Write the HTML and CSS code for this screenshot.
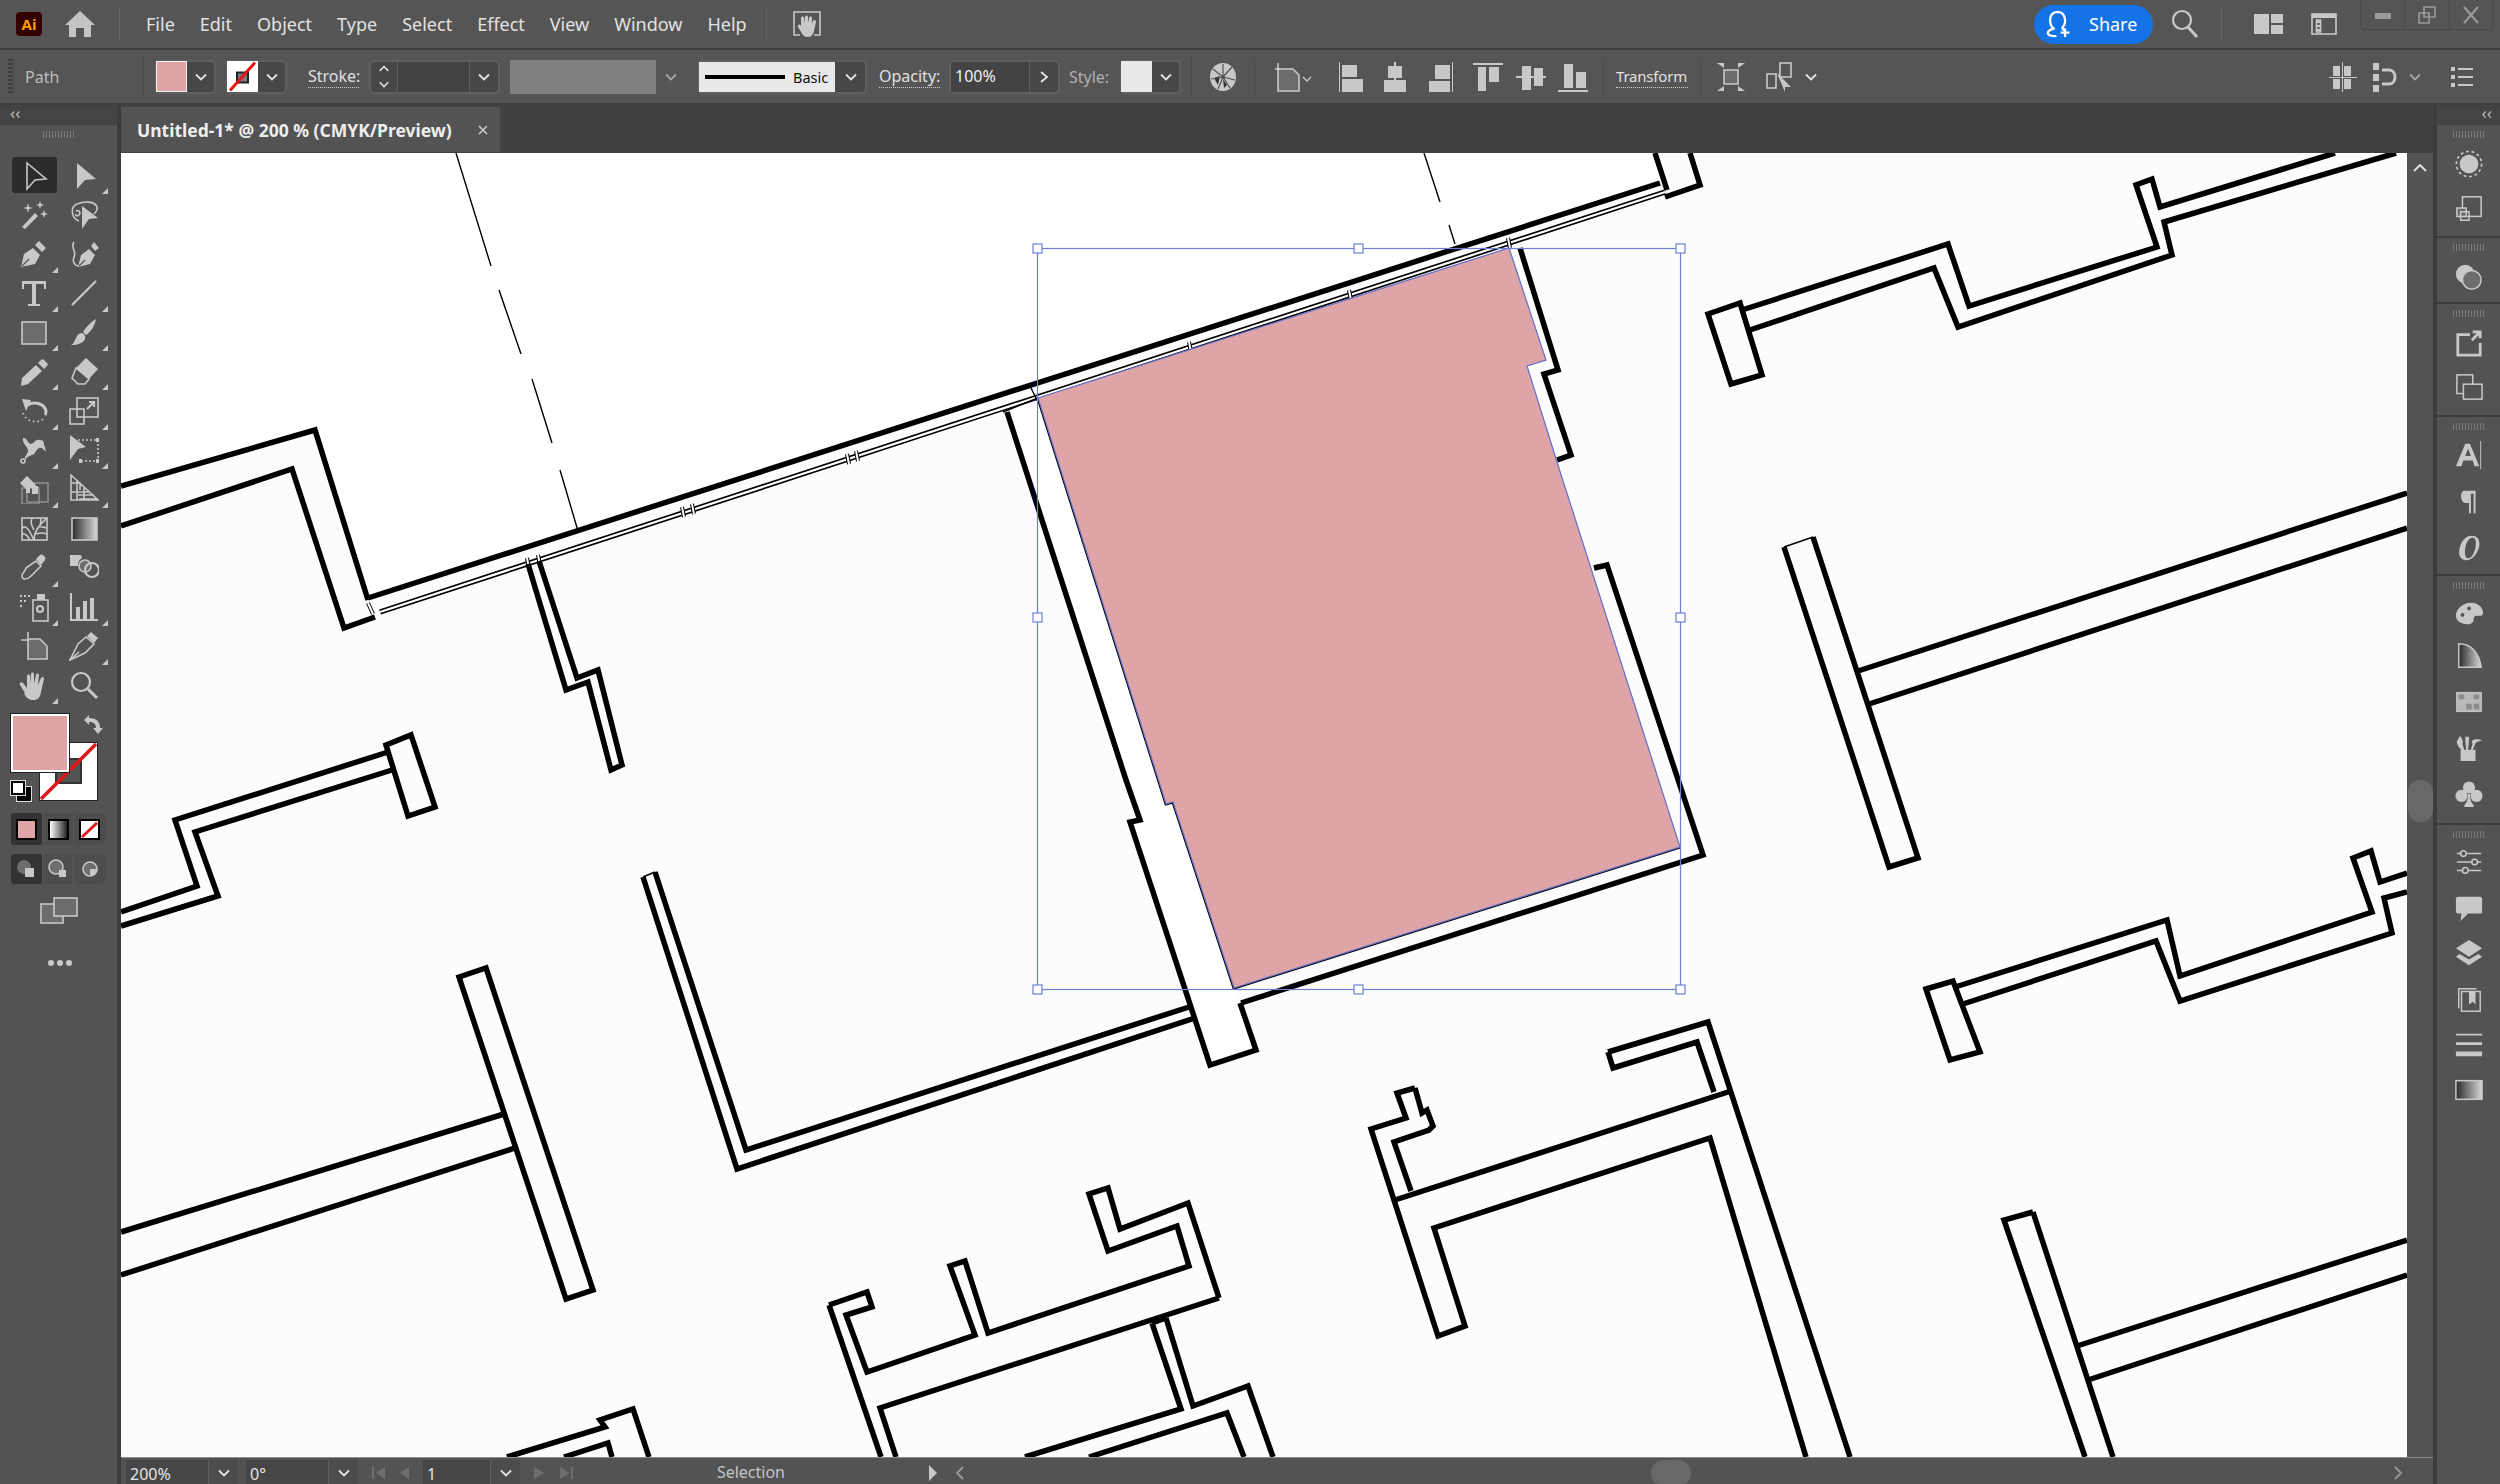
FILE: index.html
```html
<!DOCTYPE html>
<html lang="en">
<head>
<meta charset="utf-8">
<title>Untitled-1* @ 200 % (CMYK/Preview)</title>
<link rel="stylesheet" href="styles.css">
</head>
<body>
<svg class="defs" width="0" height="0">
  <defs>
    <linearGradient id="gr"><stop offset="0" stop-color="#2a2a2a"/><stop offset="1" stop-color="#d8d8d8"/></linearGradient>
    <linearGradient id="grw"><stop offset="0" stop-color="#fff"/><stop offset="1" stop-color="#222"/></linearGradient>
    <symbol id="chev" viewBox="0 0 14 14"><path class="ch" d="M2 4.500l5 5 5-5"/></symbol>
  </defs>
</svg>

<header class="titlebar">
  <div class="ai-logo">Ai</div>
  <svg class="home" viewBox="0 0 30 26"><path d="M15 0L30 14h-4v12h-7v-9h-8v9H4V14H0z"/></svg>
  <div class="vsep m24"></div>
  <nav class="menu">
    <span>File</span><span>Edit</span><span>Object</span><span>Type</span><span>Select</span><span>Effect</span><span>View</span><span>Window</span><span>Help</span>
  </nav>
  <div class="vsep m22"></div>
  <svg class="arr-ic m25" viewBox="0 0 30 30"><path class="ln" d="M8 26H2V3h26v23h-6"/><path d="M9 17V9c0-2 3-2 3 0v5l1-6c0-2 3-2 3 0v6l1-5c0-2 3-2 3 0v6l1-3c1-2 3-1 3 1l-2 9c-1 4-3 6-6 6s-5-1-7-5l-3-5c-1-2 1-3 2-2z"/></svg>
  <div class="share">
    <svg class="share-ic" viewBox="0 0 30 32"><path class="sw" d="M10 22C3 18 2 3 13 2c10 0 11 13 6 18 0 2 1 3 3 3M9 21c-2 1-6 2-7 5 0 3 5 4 10 4"/><path class="sw" d="M22 21v10M17 26h10"/></svg>
    <span>Share</span>
  </div>
  <svg class="search m18" viewBox="0 0 28 30"><circle class="ln2" cx="11" cy="11" r="9"/><path class="ln3" d="M17 18l9 10"/></svg>
  <div class="vsep m22"></div>
  <svg class="lay m34" viewBox="0 0 29 20"><path d="M0 0h15v20H0zM17 0h12v9H17zM17 11h12v9H17z"/></svg>
  <svg class="win m28" viewBox="0 0 26 22"><rect class="ln" x="1" y="1" width="24" height="20"/><path d="M1 1h24v4H1zM6 8h3v2H6zM6 12h3v2H6zM6 16h3v2H6z"/><rect class="ln" x="5.500" y="7" width="4" height="12"/></svg>
  <div class="winctl">
    <div class="wbtn"><svg viewBox="0 0 18 18"><path d="M1 7h16v6H1z"/></svg></div>
    <div class="wbtn"><svg viewBox="0 0 18 18"><path class="ln" d="M6 1h11v10H6zM1 7h10v10H1z"/></svg></div>
    <div class="wbtn"><svg viewBox="0 0 18 18"><path class="ln2" d="M2 1l14 16M16 1L2 17"/></svg></div>
  </div>
</header>

<section class="controlbar">
  <div class="grip"></div>
  <div class="lbl path">Path</div>
  <div class="vsep2"></div>
  <div class="combo m11 w61"><div class="swatch pink"></div><svg class="chev"><use href="#chev"/></svg></div>
  <div class="combo m10 w61">
    <div class="swatch wht"><svg viewBox="0 0 31 30"><rect class="sq" x="10" y="11" width="11" height="10"/><path class="red" d="M3 29L28 1"/></svg></div>
    <svg class="chev"><use href="#chev"/></svg>
  </div>
  <div class="ulbl m21 w51">Stroke:</div>
  <div class="combo m10 w131">
    <div class="spin"><svg viewBox="0 0 14 14"><path class="ch" d="M2 8l5-5 5 5"/></svg><svg viewBox="0 0 14 14"><path class="ch" d="M2 5l5 5 5-5"/></svg></div>
    <div class="field f73"></div>
    <svg class="chev"><use href="#chev"/></svg>
  </div>
  <div class="grayfield m10"></div>
  <div class="graychev"><svg class="chev dim"><use href="#chev"/></svg></div>
  <div class="combo m11 w170">
    <div class="basic"><i></i><span>Basic</span></div>
    <svg class="chev"><use href="#chev"/></svg>
  </div>
  <div class="ulbl m12 w61">Opacity:</div>
  <div class="combo m9 w111">
    <div class="field f82">100%</div>
    <svg class="chev right" viewBox="0 0 14 14"><path class="ch" d="M4 2l6 5-6 5"/></svg>
  </div>
  <div class="lbl style m9">Style:</div>
  <div class="combo m11 w61"><div class="swatch lgt"></div><svg class="chev"><use href="#chev"/></svg></div>
  <div class="vsep2 m10"></div>
  <svg class="globe m18" viewBox="0 0 26 28"><ellipse cx="13" cy="14" rx="13" ry="14"/><path class="dkfill" d="M4 15l6-2-2 9zM13 16l4 6-3 3z"/><path class="dkl" d="M13 14L13 1M13 14L3 6M13 14L1 16M13 14L8 26M13 14l7 11M13 14l12 3M13 14l9-10"/><circle class="hole" cx="13" cy="14" r="2"/></svg>
  <div class="vsep2 m18"></div>
  <svg class="artb m18" viewBox="0 0 39 30"><path class="mid" d="M5 7h15l6 6v16H5z"/><path class="ln" d="M5 7h15l6 6v16H5z"/><path class="ln" d="M2 7h5M5 1v7"/><path class="ch2" d="M30 15l4 4 4-4"/></svg>
  <svg class="al m26" viewBox="0 0 30 30"><path d="M1 0h1v30H1zM4 3h15v15H4zM4 17h21v13H4z"/><path d="M3 15h20v2H3z" class="gapc"/></svg>
  <svg class="al m12" viewBox="0 0 30 30"><path d="M14 0h2v30h-2zM8 4h14v12H8zM4 18h22v12H4z"/></svg>
  <svg class="al m14" viewBox="0 0 30 30"><path d="M28 0h1v30h-1zM11 3h15v14H11zM5 19h21v12H5z"/></svg>
  <svg class="al m19" viewBox="0 0 30 30"><path d="M0 1h30v2H0zM5 5h8v24H5zM16 5h10v15H16z"/></svg>
  <svg class="al m13" viewBox="0 0 30 30"><path d="M0 14h30v2H0zM6 4h9v24H6zM18 6h9v18h-9z"/></svg>
  <svg class="al m12" viewBox="0 0 30 30"><path d="M0 28h30v2H0zM6 2h9v24H6zM18 10h10v16H18z"/></svg>
  <div class="vsep2 m15"></div>
  <div class="ulbl small m12 w72">Transform</div>
  <div class="vsep2 m12"></div>
  <svg class="al m15" viewBox="0 0 30 30"><path class="mid" d="M8 8h14v14H8z"/><path class="ln" d="M8 8h14v14H8z"/><path d="M1 1l7 5V1M29 1l-7 5V1M1 29l7-5v5M29 29l-7-5v5"/></svg>
  <svg class="al m20" viewBox="0 0 30 30"><rect class="ln" x="1" y="12" width="9" height="14"/><rect class="ln" x="14" y="1" width="11" height="14"/><path d="M11 11l14 14-6 0v5z"/></svg>
  <svg class="chev m8"><use href="#chev"/></svg>
  <svg class="al auto" viewBox="0 0 30 30"><path d="M5 4h7v10H5zM16 4h7v10h-7zM5 17h7v10H5zM16 17h7v10h-7zM1 15h28v1H1zM14 0h1v30h-1z"/></svg>
  <svg class="al m12" viewBox="0 0 30 30"><path d="M3 1h6v7H3zM3 12h6v7H3zM3 23h6v7H3z"/><path class="ln3" d="M12 8h7c8 0 8 14 0 14h-7"/></svg>
  <svg class="chev dim m8"><use href="#chev"/></svg>
  <svg class="al m25" viewBox="0 0 30 30"><path d="M4 5h4v4H4zM4 13h4v4H4zM4 21h4v4H4zM11 6h15v2H11zM11 14h15v2H11zM11 22h15v2H11z"/></svg>
</section>

<main class="workspace">
  <aside class="toolpanel">
    <div class="collapse left">‹‹</div>
    <div class="tools-body">
      <div class="gripline"></div>
      <div class="tools">
        <div class="tool on"><svg viewBox="0 0 30 30"><path class="ln" d="M8 2l19 16-11 1-8 9z"/></svg></div>
        <div class="tool more"><svg viewBox="0 0 30 30"><path d="M8 2l19 16-11 1-8 9z"/></svg></div>
        <div class="tool"><svg viewBox="0 0 30 30"><path d="M3 27l13-14 3 3L6 29zM9 3l1 4 4 1-4 1-1 4-1-4-4-1 4-1zM21 1l1 3 3 1-3 1-1 3-1-3-3-1 3-1zM25 10l1 3 3 1-3 1-1 3-1-3-3-1 3-1z"/></svg></div>
        <div class="tool"><svg viewBox="0 0 30 30"><path class="ln" d="M10 21C2 18 1 7 8 4c7-3 18-3 20 3 1 3-1 5-3 7M7 11c3-2 5 2 3 4s-4 0-3-1"/><path d="M13 6l16 12-9 1-7 10z"/></svg></div>
        <div class="tool more"><svg viewBox="0 0 30 30"><path d="M2 28l3-13 9-6 7 7-5 9zM16 6l4-4 7 7-4 4z"/><path class="dkl" d="M3 27l7-7"/></svg></div>
        <div class="tool"><svg viewBox="0 0 30 30"><path d="M9 28l3-12 8-6 6 6-5 9zM22 7l3-4 5 6-4 3z"/><path class="ln" d="M5 3C1 9 8 12 5 18c-2 5 1 9 5 9"/><path class="dkl" d="M10 27l6-6"/></svg></div>
        <div class="tool more"><svg viewBox="0 0 30 30"><path d="M3 3h24v8h-2V6H17v20h4v2H9v-2h4V6H5v5H3z"/></svg></div>
        <div class="tool more"><svg viewBox="0 0 30 30"><path class="ln2" d="M3 27L27 3"/></svg></div>
        <div class="tool more"><svg viewBox="0 0 30 30"><rect class="mid ln" x="3" y="4" width="24" height="22"/></svg></div>
        <div class="tool more"><svg viewBox="0 0 30 30"><path d="M27 1c-1 6-5 13-10 16l-3-3C17 9 22 4 27 1zM12 15c3 0 5 3 4 6-2 4-7 6-14 6 5-2 4-11 10-12z"/></svg></div>
        <div class="tool more"><svg viewBox="0 0 30 30"><path d="M3 21L17 8l6 6L9 27l-7 2zM19 6l3-3c1-1 2-1 3 0l3 3c1 1 1 2 0 3l-3 3z"/></svg></div>
        <div class="tool more"><svg viewBox="0 0 30 30"><path d="M17 1l12 11-9 10-13-11z"/><path class="ln" d="M7 11l13 11-4 5H9l-6-6z"/></svg></div>
        <div class="tool more"><svg viewBox="0 0 30 30"><path class="ln3" d="M8 9c7-4 17-2 19 6 0 2 0 3-1 4"/><path d="M3 3l9 1-5 11z"/><path class="dots" d="M4 17c3 9 14 11 20 6"/></svg></div>
        <div class="tool more"><svg viewBox="0 0 30 30"><rect class="ln" x="8" y="2" width="21" height="19"/><rect class="ln" x="1" y="13" width="14" height="15"/><path class="ln2" d="M18 13l7-7M20 6h5v5"/></svg></div>
        <div class="tool more"><svg viewBox="0 0 30 30"><path d="M4 3c4-1 4 5 8 6 2 0 3-3 6-4 4-1 8 4 9 12-2-3-5-5-7-4-3 1-3 6-7 7-3 1-5 2-7 5-1-4 3-6 3-9 0-5-6-7-5-13z"/><circle class="ln" cx="4" cy="26" r="2"/><circle class="ln" cx="22" cy="8" r="2"/></svg></div>
        <div class="tool more"><svg viewBox="0 0 30 30"><path class="ln dash" d="M9 5h20v21H10"/><path d="M1 0l16 12-8 2-8 11zM27 3h3v4h-3zM27 24h3v4h-3zM10 24h3v4h-3z"/></svg></div>
        <div class="tool more"><svg viewBox="0 0 30 30"><rect class="ln dimln" x="8" y="9" width="21" height="19"/><rect class="ln dimln" x="3" y="14" width="17" height="16"/><path d="M1 9l7-7 3 3 6 6-3 3-3 0 0 5-4 0 0-4z"/><path d="M13 12h6v8h-6z"/></svg></div>
        <div class="tool more"><svg viewBox="0 0 30 30"><path class="ln" d="M2 1l27 25H2zM2 9h9M2 18h18M2 1v25M8 7v19M15 14v12M2 9l9 0 0 7M25 21H9M29 25H10"/></svg></div>
        <div class="tool"><svg viewBox="0 0 30 30"><rect class="ln" x="3" y="4" width="25" height="22"/><path class="ln" d="M3 14c5-3 7 2 12 12M3 20c4-1 6 2 8 6M15 26c0-8 4-14 13-22M13 4c-2 5 0 8 2 12M22 4c0 3 0 5-1 7M28 14c-4-1-6-2-9-1M28 20c-5-2-8-1-11 0"/></svg></div>
        <div class="tool"><svg viewBox="0 0 30 30"><rect class="gr ln" x="3" y="4" width="25" height="22"/></svg></div>
        <div class="tool more"><svg viewBox="0 0 30 30"><path class="ln" d="M7 15L17 8l5 5-10 10c-4 4-9 4-9 0 0-3 3-4 4-8z"/><path d="M17 6l4-4c2-2 7 3 5 5l-4 5z"/></svg></div>
        <div class="tool"><svg viewBox="0 0 30 30"><path d="M1 2h11l1 3c-3 2-4 4-4 8L1 13z"/><circle class="mid ln" cx="16" cy="13" r="6"/><circle class="ln thick" cx="23" cy="17" r="7"/></svg></div>
        <div class="tool more"><svg viewBox="0 0 30 30"><rect class="ln" x="14" y="8" width="15" height="21"/><path d="M18 2h8v6h-8zM1 3h2v2H1zM5 3h2v2H5zM9 3h2v2H9zM1 8h2v2H1zM5 8h2v2H5zM1 13h2v2H1z"/><circle class="ln2" cx="21" cy="17" r="3"/></svg></div>
        <div class="tool more"><svg viewBox="0 0 30 30"><path d="M1 1h2v26h26v2H1zM7 15h4v12H7zM14 9h4v18h-4zM21 6h4v21h-4z"/></svg></div>
        <div class="tool"><svg viewBox="0 0 30 30"><path class="mid ln" d="M9 8h12l7 7v13H9z"/><path class="ln" d="M2 9h8M9 1v8"/></svg></div>
        <div class="tool more"><svg viewBox="0 0 30 30"><path class="ln" d="M1 29l8-16 8-7 8 7-9 9z"/><path d="M18 5l4-4 7 6-4 5z"/><path class="ln" d="M1 29l9-8"/></svg></div>
        <div class="tool more"><svg viewBox="0 0 30 30"><path d="M6 22L1 14c-1-2 1-4 3-2l4 5V5c0-2 3-2 3 0v8l1-10c0-2 3-2 3 0v10l2-9c0-2 3-2 3 0l-1 10 3-7c1-2 3-1 3 1l-3 13c-1 6-3 8-8 8-4 0-7-2-9-7z"/></svg></div>
        <div class="tool"><svg viewBox="0 0 30 30"><circle class="ln2" cx="12" cy="11" r="9"/><path class="ln3" d="M19 18l9 9"/></svg></div>
      </div>
      <div class="colors">
        <div class="fillbox"></div>
        <div class="strokebox"><i></i><svg viewBox="0 0 57 57"><path class="red2" d="M1 56L56 1"/></svg></div>
        <svg class="swap" viewBox="0 0 20 20"><path d="M1 5l5-5v3c8 0 11 4 11 10h3l-5 6-5-6h3c0-4-2-6-7-6v3z"/></svg>
        <div class="defbox"><b></b><i></i></div>
      </div>
      <div class="segrow">
        <div class="seg on"><span class="mini pink"></span></div>
        <div class="seg"><span class="mini grad"></span></div>
        <div class="seg"><span class="mini none"><svg viewBox="0 0 18 18"><path class="red3" d="M1 17L17 2"/></svg></span></div>
      </div>
      <div class="segrow second">
        <div class="seg on"><svg viewBox="0 0 20 20"><circle class="midc" cx="8" cy="8" r="7"/><path d="M9 9h9v9H9z"/></svg></div>
        <div class="seg"><svg viewBox="0 0 20 20"><circle class="ln midc" cx="8" cy="8" r="7"/><path d="M11 11h7v7h-7z"/></svg></div>
        <div class="seg"><svg viewBox="0 0 20 20"><circle class="ln midc" cx="10" cy="10" r="7"/><path d="M10 10h7c0 4-3 7-7 7z"/></svg></div>
      </div>
      <svg class="screen" viewBox="0 0 38 28"><rect class="mid ln" x="1" y="7" width="22" height="19"/><rect class="mid ln" x="14" y="1" width="23" height="18"/></svg>
      <div class="more-dots"><i></i><i></i><i></i></div>
    </div>
  </aside>

  <div class="center">
    <div class="tabbar">
      <div class="tab"><span>Untitled-1* @ 200 % (CMYK/Preview)</span><svg viewBox="0 0 12 12"><path class="ln" d="M2 2l8 8M10 2l-8 8"/></svg></div>
    </div>
    <div class="canvasrow">
      <div class="canvas">
        <svg class="art" width="2286" height="1304" viewBox="121 153 2286 1304">
          <polygon class="paper" points="121,153 1660,153 1665,180 368,598 315,430 121,486"/>
          <polygon class="paper" points="1007,412 1036,383 1038,400 1240,1003 1256,1050 1210,1065 1130,822 1140,820 1126,780"/>
          <g class="walls">
            <path d="M456 153L491 266M499 290L521 354M532 379L552 443M560 470L578 531M1424 153L1440 202M1449 225L1455 244" class="thin"/>
            <path d="M121 486L315 430L368 600M121 526L292 469L344 628L375 617"/>
            <path d="M368 598L1660 183M1655 153L1667 190M1690 153L1700 185L1665 197"/>
            <path d="M380 612L1665 192" class="dbl"/>
            <path d="M380 612L1665 192" class="dblw"/>
            <path class="mullb" d="M368 603L373 614M527 558L529 568M538 555L540 565M682 507L684 517M692 504L694 514M847 454L849 464M856 451L858 461M1189 342L1191 352M1349 290L1351 300M1508 238L1510 248"/>
            <path class="mull" d="M368 603L373 614M527 558L529 568M538 555L540 565M682 507L684 517M692 504L694 514M847 454L849 464M856 451L858 461M1189 342L1191 352M1349 290L1351 300M1508 238L1510 248"/>
            <path d="M528 564L566 690L588 682L611 770L622 765L598 670L577 678L539 561"/>
            <path d="M1007 412L1126 780L1140 820L1130 822L1210 1065L1256 1050L1240 1003"/>
            <path class="thin" d="M1005 395L1036 383M1003 412L1038 398M1031 388L1038 402"/>
            <path d="M1520 248L1558 370L1544 374L1571 455L1557 460M1594 568L1607 565L1703 855L1241 1003"/>
            <path d="M655 872L746 1150L1189 1007M643 877L737 1169L1195 1018"/>
            <path class="thin" d="M643 877L655 872"/>
            <path d="M386 745L411 735L435 807L408 816Z"/>
            <path d="M121 912L197 886L175 820L388 752M121 926L218 896L195 832L392 770"/>
            <path d="M459 977L486 968L593 1290L566 1299Z"/>
            <path d="M121 1232L504 1114M121 1275L515 1148"/>
            <path d="M1708 314L1740 303L1762 375L1731 384Z"/>
            <path d="M1742 310L1948 244L1969 306L2157 247L2136 185L2152 179L2160 207L2335 153M1750 330L1934 268L1958 327L2172 255L2164 222L2396 153"/>
            <path d="M1813 537L1918 858L1889 867L1784 547"/>
            <path class="thin" d="M1784 547L1813 537"/>
            <path d="M1858 671L2407 493M1869 704L2407 528"/>
            <path d="M1926 989L1953 981L1980 1052L1950 1060Z"/>
            <path d="M1955 987L2167 920L2180 976L2372 912L2353 858L2371 851L2380 882L2407 873M1963 1004L2156 941L2180 1001L2392 933L2384 898L2407 892"/>
            <path d="M1608 1052L1708 1022L1850 1457M1608 1052L1613 1068L1697 1042L1714 1092M1395 1200L1728 1092"/>
            <path d="M1415 1088L1397 1093L1406 1118L1371 1129L1438 1336L1465 1326L1434 1228L1710 1138L1806 1457M1415 1088L1422 1113L1427 1110L1433 1126L1429 1130L1394 1142L1411 1191"/>
            <path d="M1219 1298L880 1408L896 1457M829 1305L867 1292L872 1307L846 1315L867 1372L975 1335L950 1266L965 1261L988 1333L1189 1266L1177 1226L1108 1251L1089 1194L1108 1188L1120 1229L1188 1203L1219 1298M829 1305L881 1457"/>
            <path d="M1152 1323L1181 1409L1025 1457M1166 1318L1193 1406L1248 1386L1273 1457M1089 1457L1227 1413L1244 1457M1152 1323L1166 1318"/>
            <path d="M507 1457L605 1427L600 1420L633 1409L649 1457M564 1457L608 1443L612 1457"/>
            <path d="M2033 1212L2004 1220L2085 1457M2033 1212L2113 1457M2077 1346L2407 1240M2088 1380L2407 1275"/>
            <path class="edge" d="M1038 398L1166 804L1173 802L1234 988L1680 847"/>
          </g>
          <path class="shape" d="M1038 398L1509 248L1546 360L1527 366L1557 462L1680 847L1234 988L1173 802L1166 804Z"/>
          <g class="sel">
            <rect class="bbox" x="1037.500" y="248.500" width="643" height="741"/>
            <rect x="1033" y="244" width="9" height="9"/><rect x="1354" y="244" width="9" height="9"/><rect x="1676" y="244" width="9" height="9"/>
            <rect x="1033" y="613" width="9" height="9"/><rect x="1676" y="613" width="9" height="9"/>
            <rect x="1033" y="985" width="9" height="9"/><rect x="1354" y="985" width="9" height="9"/><rect x="1676" y="985" width="9" height="9"/>
          </g>
        </svg>
      </div>
      <div class="vscroll"><svg viewBox="0 0 14 8"><path class="ch" d="M1 7l6-6 6 6"/></svg><div class="vthumb"></div></div>
    </div>
    <footer class="statusbar">
      <div class="sfield f82">200%</div><div class="sdd"><svg class="chev"><use href="#chev"/></svg></div>
      <div class="sfield f82 m8">0°</div><div class="sdd"><svg class="chev"><use href="#chev"/></svg></div>
      <div class="navbtns m11"><svg viewBox="0 0 50 16"><path d="M3 2h2v12H3zM16 2v12l-9-6zM40 2v12l-9-6z"/></svg></div>
      <div class="sfield f67 m4">1</div><div class="sdd"><svg class="chev"><use href="#chev"/></svg></div>
      <div class="navbtns m14"><svg viewBox="0 0 50 16"><path d="M0 2v12l10-6zM26 2v12l10-6zM37 2h2v12h-2z"/></svg></div>
      <div class="sellbl">Selection</div>
      <svg class="play" viewBox="0 0 10 16"><path d="M1 0l8 8-8 8z"/></svg>
      <div class="hscroll">
        <svg class="hch" viewBox="0 0 8 14"><path class="ch" d="M7 1L1 7l6 6"/></svg>
        <div class="hthumb"></div>
        <svg class="hch" viewBox="0 0 8 14"><path class="ch" d="M1 1l6 6-6 6"/></svg>
      </div>
    </footer>
  </div>

  <aside class="rightpanel">
    <div class="collapse right">‹‹</div>
    <div class="dock d111">
      <div class="gripline"></div>
      <svg viewBox="0 0 30 30"><circle cx="15" cy="15" r="10"/><circle class="dots2" cx="15" cy="15" r="13.500"/></svg>
      <svg viewBox="0 0 30 30"><rect class="ln" x="8" y="3" width="20" height="21"/><path class="mid ln" d="M2 15h10v9H2z"/><path class="ln" d="M6 19h9v9H6z"/></svg>
    </div>
    <div class="dock d65">
      <div class="gripline"></div>
      <svg viewBox="0 0 30 30"><circle cx="11" cy="12" r="10"/><circle class="midc ln" cx="18" cy="18" r="10"/></svg>
    </div>
    <div class="dock d111">
      <div class="gripline"></div>
      <svg viewBox="0 0 30 30"><path class="ln3" d="M16 6H3v22h24V15M27 10V3h-8M27 3l-9 9"/></svg>
      <svg viewBox="0 0 30 30"><rect class="ln" x="2" y="2" width="17" height="20"/><rect class="bgfill ln" x="9" y="12" width="20" height="16"/></svg>
    </div>
    <div class="dock d158 typ">
      <div class="gripline"></div>
      <svg viewBox="0 0 30 30"><path d="M1 27L11 3h5l10 24h-5l-2-6H9l-2 6zM11 16h6l-3-8zM27 0h1v30h-1z"/></svg>
      <svg viewBox="0 0 30 30"><path d="M10 2h12v24h-2V5h-3v21h-2V15h-3c-7 0-7-13-2-13z"/></svg>
      <svg viewBox="0 0 30 30"><path fill-rule="evenodd" d="M18 2c6 0 9 4 8 11-2 9-8 15-14 15S3 23 5 15C7 7 12 2 18 2zM19 4c-4 0-7 5-8 11-1 6 0 11 3 11 4 0 7-6 8-12 1-6 0-10-3-10z"/></svg>
    </div>
    <div class="dock d248 lib">
      <div class="gripline"></div>
      <svg viewBox="0 0 30 30"><path fill-rule="evenodd" d="M1 17C1 9 9 3 17 3c8 0 13 5 13 11 0 3-2 3-5 3-3 0-5 0-5 3 0 3-1 6-7 6-7 0-12-4-12-9zM15 7a2 2 0 100 4 2 2 0 000-4zM8 14a2 2 0 100 4 2 2 0 000-4z"/><circle class="hole" cx="22" cy="10" r="0"/></svg>
      <svg viewBox="0 0 30 30"><path class="gr2 ln" d="M4 2c13 0 22 9 24 25H4z"/></svg>
      <svg viewBox="0 0 30 30"><rect class="ln" x="2" y="5" width="26" height="20"/><path d="M2 5h26v20H2z" class="dimfill"/><path class="dkfill2" d="M4 7h6v5H4zM20 7h6v5h-6zM12 17h6v6h-6zM20 17h6v6h-6z"/></svg>
      <svg viewBox="0 0 30 30"><path d="M6 17h16v12H6zM2 8c1-2 3-4 3-6 3 3 4 6 3 9l2 6H7c-2-2-5-5-5-9zM11 3h4v4l-1 10h-2L11 7zM18 8c1-3 8-3 11-1-3 1-6 1-7 3l-3 7h-2l2-7c-1 0-1-1-1-2z"/></svg>
      <svg viewBox="0 0 30 30"><circle cx="15" cy="8" r="6.500"/><circle cx="7" cy="17" r="6.500"/><circle cx="23" cy="17" r="6.500"/><path d="M14 15h2c0 5 1 9 4 12v2H10v-2c3-3 4-7 4-12z"/></svg>
    </div>
    <div class="dock last">
      <div class="gripline"></div>
      <svg viewBox="0 0 30 30"><path class="ln" d="M2 6h5M12 6h16M2 15h16M24 15h4M2 24h6M14 24h14"/><circle class="ln" cx="9" cy="6" r="3"/><circle class="ln" cx="21" cy="15" r="3"/><circle class="ln" cx="11" cy="24" r="3"/></svg>
      <svg viewBox="0 0 30 30"><path d="M4 3h23c1 0 2 1 2 2v14c0 1-1 2-2 2H14l-8 8 1-8H4c-2 0-3-1-3-2V5c0-1 1-2 3-2z"/></svg>
      <svg viewBox="0 0 30 30"><path d="M15 1l14 9-14 9-14-9zM5 16l10 6 10-6 4 3-14 9-14-9z"/></svg>
      <svg viewBox="0 0 30 30"><path class="ln" d="M4 25V4h19M7 28V7h20v21z"/><path d="M15 7h7v14l-3-3-4 3z"/></svg>
      <svg viewBox="0 0 30 30"><path d="M1 4h28v2H1zM1 13h28v3H1zM1 23h28v5H1z"/></svg>
      <svg viewBox="0 0 30 30"><rect class="gr ln" x="1" y="5" width="28" height="20"/></svg>
    </div>
  </aside>
</main>
</body>
</html>
```
FILE: styles.css
```css
* { box-sizing: border-box; }
html, body { margin: 0; padding: 0; height: 100%; }
body {
  width: 2500px; height: 1484px; overflow: hidden;
  background: #535353; color: #e0e0e0;
  font-family: "Noto Sans", "Open Sans", sans-serif;
  display: flex; flex-direction: column;
}
.defs { position: absolute; }
svg { display: block; fill: #c8c8c8; flex: none; }
i, b { display: block; }

.ln { fill: none; stroke: #c8c8c8; stroke-width: 1.6; }
.ln2 { fill: none; stroke: #c8c8c8; stroke-width: 2.2; }
.ln3 { fill: none; stroke: #c8c8c8; stroke-width: 3; }
.mid { fill: #6c6c6c; }
.midc { fill: #6e6e6e; }
.gr { fill: url(#gr); }
.gr2 { fill: url(#gr); }
.dimln { stroke: #8d8d8d; }
.dash { stroke-dasharray: 2 2; }
.thick { stroke-width: 2.2; }
.dots { fill: none; stroke: #c8c8c8; stroke-width: 1.8; stroke-dasharray: 1.500 3; }
.dots2 { fill: none; stroke: #c8c8c8; stroke-width: 1.8; stroke-dasharray: 3 3; }
.dkl { fill: none; stroke: #535353; stroke-width: 1.2; }
.dkfill { fill: #333; }
.dkfill2 { fill: #8c8c8c; }
.dimfill { fill: #b8b8b8; }
.bgfill { fill: #535353; }
.gapc { fill: #535353; }
.hole { fill: #535353; }
.ch { fill: none; stroke: #e4e4e4; stroke-width: 1.8; }
.ch2 { fill: none; stroke: #c8c8c8; stroke-width: 1.4; }
.sq { fill: #7a7a7a; stroke: #222; stroke-width: 2; }
.red { fill: none; stroke: #e1161b; stroke-width: 3; }
.red2 { fill: none; stroke: #e1161b; stroke-width: 3.500; }
.red3 { fill: none; stroke: #e1161b; stroke-width: 3; }

.m4 { margin-left: 4px; } .m8 { margin-left: 8px; } .m9 { margin-left: 9px; }
.m10 { margin-left: 10px; } .m11 { margin-left: 11px; } .m12 { margin-left: 12px; }
.m13 { margin-left: 13px; } .m14 { margin-left: 14px; } .m15 { margin-left: 15px; }
.m18 { margin-left: 18px; } .m19 { margin-left: 19px; } .m20 { margin-left: 20px; }
.m21 { margin-left: 21px; } .m22 { margin-left: 22px; } .m24 { margin-left: 24px; }
.m25 { margin-left: 25px; } .m26 { margin-left: 26px; } .m28 { margin-left: 28px; }
.m34 { margin-left: 34px; }
.auto { margin-left: auto; }

/* title bar */
.titlebar {
  height: 50px; flex: none; display: flex; align-items: center;
  padding-left: 16px; background: #555; border-bottom: 2px solid #3a3a3a; position: relative;
}
.ai-logo {
  width: 26px; height: 24px; border-radius: 4px; background: #330000; color: #ff9a00;
  font: 700 15px/24px "Noto Sans", sans-serif; text-align: center;
}
.home { width: 30px; height: 26px; margin-left: 23px; fill: #c4c4c4; }
.vsep { width: 1px; height: 32px; background: #626262; flex: none; }
.menu { display: flex; gap: 25px; margin-left: 26px; font-size: 18px; line-height: 24px; color: #e2e2e2; width: 598px; }
.menu span { flex: none; }
.arr-ic { width: 30px; height: 30px; }
.share {
  margin-left: 1212px; width: 119px; height: 39px; border-radius: 20px; background: #1473e6;
  display: flex; align-items: center; padding-left: 12px; gap: 17px;
  color: #fff; font-size: 18px; line-height: 24px;
}
.share-ic { width: 26px; height: 30px; }
.sw { fill: none; stroke: #fff; stroke-width: 2.6; }
.search { width: 28px; height: 30px; }
.lay { width: 29px; height: 20px; margin-left: 32px; }
.win { width: 26px; height: 22px; }
.winctl {
  position: absolute; right: 6px; top: 0; height: 30px; width: 134px; display: flex;
  border: 1px solid #494949; border-top: 0; border-radius: 0 0 5px 5px;
}
.wbtn { flex: 1; display: flex; align-items: center; justify-content: center; border-left: 1px solid #494949; }
.wbtn:first-child { border-left: 0; }
.wbtn svg { width: 18px; height: 18px; fill: #9a9a9a; }
.wbtn .ln, .wbtn .ln2 { stroke: #9a9a9a; }

/* control bar */
.controlbar {
  height: 55px; flex: none; display: flex; align-items: center; padding-left: 8px; padding-right: 23px;
  background: #555; border-bottom: 2px solid #3f3f3f; font-size: 16px;
}
.grip { width: 5px; height: 36px; background: repeating-linear-gradient(#3e3e3e 0 2px, transparent 2px 4px); }
.lbl { color: #bbb; line-height: 22px; }
.path { width: 118px; margin-left: 12px; }
.style { width: 40px; color: #b0b0b0; }
.vsep2 { width: 1px; height: 40px; background: #4a4a4a; flex: none; }
.ulbl { color: #e0e0e0; line-height: 22px; border-bottom: 1px dotted #d0d0d0; flex: none; white-space: nowrap; }
.ulbl.small { font-size: 15px; letter-spacing: -.2px; }
.w51 { width: 51px; } .w61 { width: 61px; } .w72 { width: 72px; }
.combo {
  height: 34px; flex: none; display: flex; align-items: center; justify-content: space-between;
  border: 2px solid #5f5f5f; border-radius: 5px; background: #474747;
}
.w131 { width: 131px; } .w170 { width: 170px; } .w111 { width: 111px; }
.combo > .chev { width: 14px; height: 14px; margin: 0 7px; }
.chev { width: 14px; height: 14px; }
.dim .ch, .chev.dim { opacity: .55; }
.swatch { width: 31px; height: 31px; flex: none; margin-left: -1px; }
.swatch svg { width: 100%; height: 100%; }
.pink { background: #dea4a8; border: 1px solid #f0f0f0; }
.wht { background: #fff; }
.lgt { background: #e9e9e9; }
.spin { width: 28px; display: flex; flex-direction: column; align-items: center; gap: 2px; border-right: 1px solid #5f5f5f; height: 100%; justify-content: center; }
.spin svg { width: 14px; height: 12px; }
.field { height: 100%; color: #f0f0f0; line-height: 29px; padding-left: 4px; border-right: 1px solid #5f5f5f; background: #434343; }
.f73 { width: 73px; } .f82 { width: 82px; }
.grayfield { width: 146px; height: 34px; background: #7f7f7f; flex: none; }
.graychev { width: 30px; height: 34px; display: flex; align-items: center; justify-content: center; background: #565656; flex: none; }
.basic { width: 136px; height: 30px; background: #e9e9e9; display: flex; align-items: center; padding: 0 0 0 6px; color: #111; font-size: 14.500px; gap: 8px; overflow: visible; }
.basic i { width: 80px; height: 4px; background: #000; flex: none; }
.globe { width: 26px; height: 28px; }
.artb { width: 39px; height: 30px; }
.al { width: 30px; height: 30px; }

/* workspace */
.workspace { flex: 1; min-height: 0; display: flex; }
.toolpanel { width: 121px; flex: none; display: flex; flex-direction: column; background: #3c3c3c; padding-right: 4px; }
.collapse { height: 20px; flex: none; background: #444; color: #bcbcbc; font-size: 17px; line-height: 15px; }
.collapse.left { padding-left: 10px; }
.collapse.right { padding-right: 8px; text-align: right; }
.tools-body { flex: 1; background: #535353; padding: 6px 0 0 0; position: relative; }
.gripline { width: 32px; height: 7px; margin: 0 auto; background: repeating-linear-gradient(90deg, #7a7a7a 0 1px, transparent 1px 3px); }
.tools { display: grid; grid-template-columns: 50px 50px; grid-auto-rows: 39.240px; margin: 18px 0 0 9px; }
.tool { position: relative; display: flex; align-items: center; justify-content: center; }
.tool svg { width: 30px; height: 30px; }
.tool.on::before { content: ""; position: absolute; left: 3px; top: 1px; width: 45px; height: 36px; background: #2c2c2c; border-radius: 3px; }
.tool.on svg { position: relative; }
.tool.more::after {
  content: ""; position: absolute; right: 1px; bottom: 1px; width: 0; height: 0;
  border-left: 6px solid transparent; border-bottom: 6px solid #c8c8c8;
}
.colors { position: relative; height: 90px; margin: 9px 0 0 11px; }
.fillbox { width: 58px; height: 58px; background: #dea4a8; border: 2px solid #fff; outline: 1px solid #222; position: absolute; left: 0; top: 0; z-index: 1; }
.strokebox { width: 57px; height: 57px; background: #fff; position: absolute; left: 29px; top: 29px; outline: 1px solid #222; }
.strokebox i { position: absolute; left: 15px; top: 15px; width: 27px; height: 26px; background: #535353; border: 2px solid #333; }
.strokebox svg { position: absolute; left: 0; top: 0; width: 57px; height: 57px; }
.swap { position: absolute; left: 72px; top: 1px; width: 20px; height: 20px; }
.defbox { position: absolute; left: 0; top: 67px; width: 20px; height: 20px; }
.defbox b { position: absolute; right: 0; bottom: 0; width: 14px; height: 14px; background: #000; outline: 1px solid #ddd; }
.defbox i { position: absolute; left: 0; top: 0; width: 14px; height: 14px; background: #fff; border: 2px solid #000; outline: 1px solid #ddd; }
.segrow { display: flex; width: 94px; height: 32px; margin: 9px 0 0 11px; background: #4d4d4d; border-radius: 4px; }
.segrow.second { margin-top: 9px; height: 30px; }
.seg { flex: 1; display: flex; align-items: center; justify-content: center; border-left: 1px solid #585858; }
.seg.on { background: #333; border-radius: 3px; border-left: 0; }
.seg svg { width: 20px; height: 20px; }
.mini { width: 21px; height: 21px; border: 2px solid #000; display: block; }
.mini.pink { background: #dea4a8; }
.mini.grad { background: linear-gradient(90deg, #fff, #222); }
.mini.none { background: #fff; }
.mini svg { width: 100%; height: 100%; }
.screen { width: 38px; height: 28px; margin: 13px 0 0 40px; }
.more-dots { display: flex; gap: 3px; margin: 35px 0 0 48px; }
.more-dots i { width: 6px; height: 6px; border-radius: 50%; background: #c8c8c8; }

/* center */
.center { flex: 1; min-width: 0; display: flex; flex-direction: column; }
.tabbar { height: 48px; flex: none; background: #414141; padding-top: 2px; display: flex; }
.tab {
  width: 379px; height: 45px; background: #535353; display: flex; align-items: center; padding-left: 16px;
  font-weight: 700; font-size: 17.500px; color: #eee;
}
.tab span { width: 340px; flex: none; white-space: nowrap; }
.tab svg { width: 12px; height: 12px; }
.canvasrow { height: 1304px; flex: none; display: flex; }
.canvas { width: 2286px; flex: none; background: #fcfcfc; overflow: hidden; }
.art { fill: none; }
.paper { fill: #fff; }
.walls path { fill: none; stroke: #000; stroke-width: 5.500; stroke-linejoin: miter; }
.walls path.thin { stroke-width: 1.400; }
.walls path.dbl { stroke-width: 5.500; }
.walls path.dblw { stroke: #fff; stroke-width: 2.200; }
.walls path.mullb { stroke: #000; stroke-width: 4; }
.walls path.mull { stroke: #fff; stroke-width: 2; }
.walls path.edge { stroke-width: 3; }
.shape { fill: #dea4a8; stroke: #5f6fc8; stroke-width: 1.200; }
.sel rect { fill: #fff; stroke: #6d7fd8; stroke-width: 1.200; }
.sel .bbox { fill: none; }
.vscroll { flex: 1; background: #535353; position: relative; padding: 11px 0 0 6px; }
.vscroll svg { width: 14px; height: 8px; }
.vthumb { position: absolute; left: 1px; top: 627px; width: 25px; height: 42px; border-radius: 12px; background: #686868; }

.statusbar { flex: 1; display: flex; align-items: center; padding-left: 5px; background: #535353; font-size: 16px; color: #e4e4e4; border-top: 1px solid #8b8b8b; }
.sfield { height: 26px; line-height: 29px; padding-left: 4px; background: #464646; flex: none; }
.f67 { width: 67px; }
.sdd { width: 30px; height: 26px; display: flex; align-items: center; justify-content: center; border-left: 1px solid #5e5e5e; background: #4c4c4c; flex: none; }
.navbtns { width: 50px; flex: none; }
.navbtns svg { width: 50px; height: 16px; fill: #6e6e6e; }
.sellbl { width: 341px; text-align: right; padding-right: 140px; color: #c4c4c4; line-height: 29px; flex: none; white-space: nowrap; }
.play { width: 10px; height: 16px; margin-left: 3px; }
.hscroll { flex: 1; display: flex; align-items: center; margin-left: 18px; padding-right: 8px; }
.hch { width: 8px; height: 14px; }
.hch .ch { stroke: #9a9a9a; }
.hthumb { width: 40px; height: 26px; border-radius: 13px; background: #686868; margin: 0 703px 0 687px; }

/* right dock */
.rightpanel { width: 67px; flex: none; background: #3c3c3c; padding-left: 4px; display: flex; flex-direction: column; }
.dock { background: #535353; display: flex; flex-direction: column; align-items: center; flex: none; margin-bottom: 2px; padding-top: 6px; }
.dock svg { width: 28px; height: 28px; }
.d111 { height: 111px; } .d65 { height: 64px; } .d158 { height: 157px; } .d248 { height: 247px; }
.d111 svg:nth-of-type(1) { margin-top: 12px; }
.d111 svg:nth-of-type(2) { margin-top: 16px; }
.d65 svg { margin-top: 12px; }
.typ svg:nth-of-type(1) { margin-top: 11px; }
.typ svg:nth-of-type(2) { margin-top: 20px; }
.typ svg:nth-of-type(3) { margin-top: 17px; }
.lib svg:nth-of-type(1) { margin-top: 11px; }
.lib svg:nth-of-type(2) { margin-top: 14px; }
.lib svg:nth-of-type(n+3) { margin-top: 18px; }
.last { flex: 1; margin-bottom: 0; }
.last svg { margin-top: 17.500px; }
.last svg:first-of-type { margin-top: 10px; }
```
